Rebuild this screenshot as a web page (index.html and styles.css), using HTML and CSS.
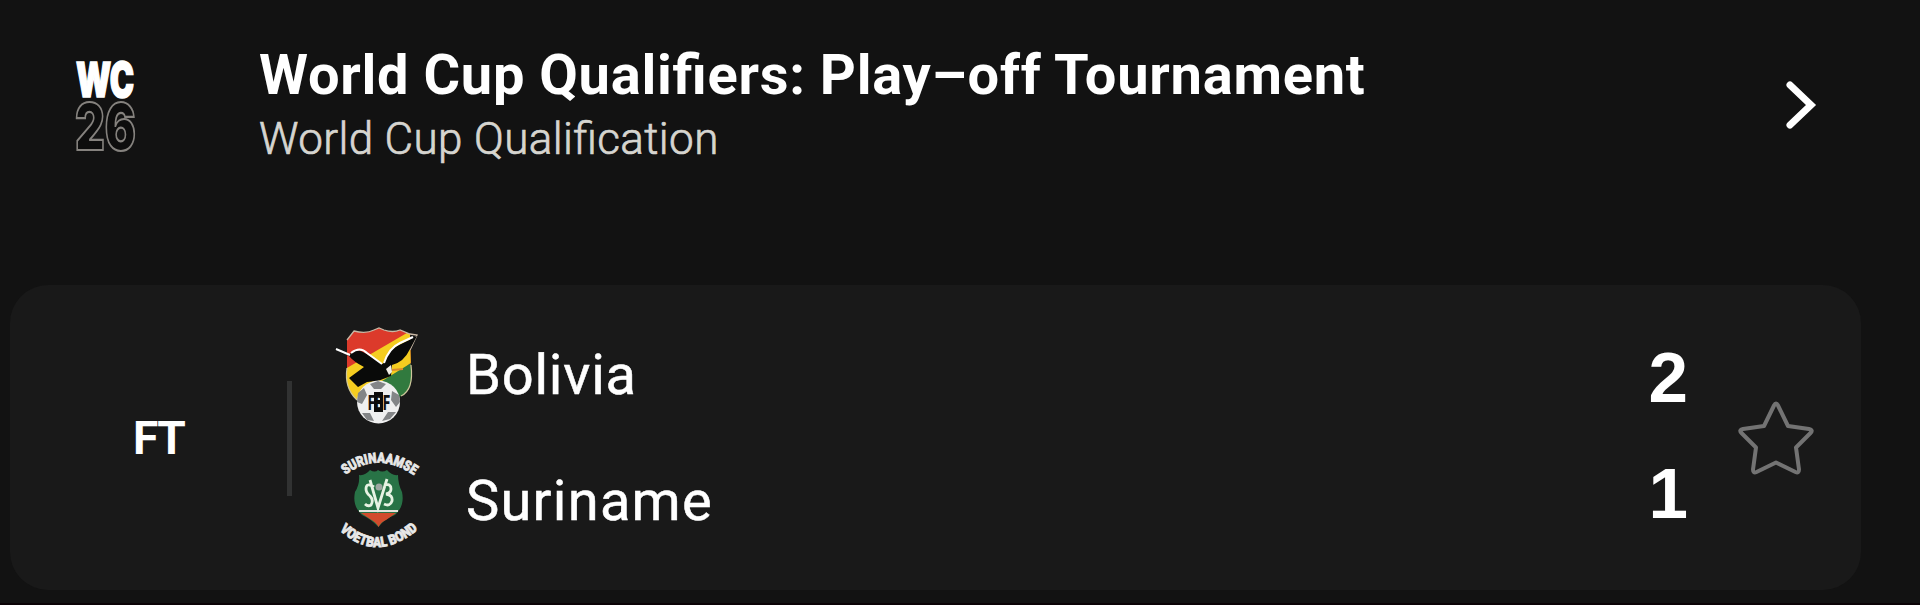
FILE: index.html
```html
<!DOCTYPE html>
<html lang="en">
<head>
<meta charset="utf-8">
<title>World Cup Qualifiers</title>
<link rel="stylesheet" href="styles.css">
</head>
<body>
<main class="page">
  <header class="league">
    <svg class="league-logo" viewBox="0 0 64 94" role="img">
      <text class="logo-wc" x="1" y="37.500" textLength="58" lengthAdjust="spacingAndGlyphs">WC</text>
      <text class="logo-26" x="0" y="90.500" textLength="61" lengthAdjust="spacingAndGlyphs">26</text>
    </svg>
    <div class="league-text">
      <h1 class="league-title">World Cup Qualifiers: Play–off Tournament</h1>
      <p class="league-sub">World Cup Qualification</p>
    </div>
    <svg class="chevron" viewBox="0 0 32 50"><path d="M5 5L26 25L5 45"/></svg>
  </header>
  <section class="match">
    <div class="status">FT</div>
    <div class="divider"></div>
    <div class="teams">
      <div class="team">
        <svg class="crest" viewBox="0 0 120 130">
          <defs><clipPath id="shield"><path d="M27 30L34 21Q46 24 54 20L59 18L64 20Q73 23 80 20L90 24L91 60Q94 80 81 86L58 98L37 90Q24 78 27 60Z"/></clipPath></defs>
          <g clip-path="url(#shield)">
            <rect x="20" y="15" width="80" height="50" fill="#dc3a2b"/>
            <path d="M20 62L92 20L100 45L40 95L20 90Z" fill="#f5cd20"/>
            <path d="M62 71L96 50V95H50Z" fill="#317a3e"/>
          </g>
          <path d="M27 30L34 21Q46 24 54 20L59 18L64 20Q73 23 80 20L90 24L97 25L90 40" fill="none" stroke="#c9b8a5" stroke-width="1.3"/>
          <path d="M91 55Q94 80 81 86M27 58Q24 78 37 90" fill="none" stroke="#cfc79c" stroke-width="1.2"/>
          <path d="M16 40L29 45Q36 37 45 43L63 54Q67 42 77 36L97 26L90 39Q84 52 72 55L71 66L58 71L47 72L38 77L29 68L44 57Q34 52 29 46Z" fill="#090a09"/>
          <path d="M16 39L30 45M31 43Q40 36 47 43L62 54M64 53Q69 38 80 33L93 27" fill="none" stroke="#fff" stroke-width="2"/>
          <path d="M66 59l5-4 1 7-3 3z" fill="#f4f0e8"/><path d="M72 60L83 59" stroke="#dc8b2d" stroke-width="2"/>
          <circle cx="58.500" cy="92" r="21.500" fill="#efefef"/>
          <path d="M50 74l8-3 8 3-5 5h-7zM38 83l6-5 3 7-5 9-5-2zM79 85l-7-4-1 9 5 7 4-5zM42 103l8 0 4 8-7-1zM76 102l-8 0-6 9 8-2z" fill="#838587"/>
          <text class="ball-text" x="48" y="100" textLength="22" lengthAdjust="spacingAndGlyphs">FBF</text>
          <path d="M54 82h9v20h-9zM57 86h3v4h-3zM57 94h3v4h-3z" fill="#0b0b0b" fill-rule="evenodd"/>
        </svg>
        <span class="team-name bolivia">Bolivia</span>
        <span class="score score-home">2</span>
      </div>
      <div class="team">
        <svg class="crest crest-away" viewBox="0 0 120 125">
          <defs>
            <path id="arcTop" d="M25.500 35Q58.500 9 98 38"/>
            <path id="arcBottom" d="M19.500 90Q58 126 102 86"/>
          </defs>
          <text class="crest-text"><textPath href="#arcTop" textLength="74" lengthAdjust="spacingAndGlyphs">SURINAAMSE</textPath></text>
          <text class="crest-text"><textPath href="#arcBottom" textLength="88" lengthAdjust="spacingAndGlyphs">VOETBAL BOND</textPath></text>
          <path d="M39 35Q45 36 50 30Q55 33 58 30Q62 33 67 30Q72 36 78 35Q78 44 82 52Q85 66 75 75Q64 79 58.500 87Q51 79 42 75Q32 66 35 52Q40 44 39 35Z" fill="#287346"/>
          <path d="M41 73H76L66 80Q61 82 58.500 87Q56 82 50 79Z" fill="#d24b2c"/>
          <path d="M39 71H78" stroke="#e5e5dd" stroke-width="2"/>
          <circle cx="59" cy="47" r="3.500" fill="#9da7a1"/>
          <path d="M54 47Q46 42 46 49Q46 53 50 56Q54 60 51 65Q48 67 45 64M50 40L58 68L67 39M64 45Q71 43 71 49Q71 53 66 54Q73 55 72 61Q70 67 64 64" fill="none" stroke="#e7f3e3" stroke-width="2.800"/>
        </svg>
        <span class="team-name suriname">Suriname</span>
        <span class="score score-away">1</span>
      </div>
    </div>
    <svg class="star" viewBox="0 0 80 76"><path d="M38 5.500Q40 1.500 42 5.500L52 26L73 29Q77.500 30 74.500 33L60 47.500L63 69.500Q63 73.500 59.500 72L40 62.500L20.500 72Q17 73.500 17 69.500L20 47.500L5.500 33Q2.500 30 7 29L28 26Z"/></svg>
  </section>
</main>
</body>
</html>
```
FILE: styles.css
```css
* { box-sizing: border-box; }
body { margin: 0; background: #121212; color: #fff; font-family: Roboto, "Noto Sans", sans-serif; }
.page { height: 605px; overflow: hidden; padding: 0 59px 0 10px; display: flex; flex-direction: column; border-bottom: 2px solid #0b0306; }
.league { height: 285px; flex: none; display: flex; align-items: flex-start; padding: 42px 42px 0 65px; }
.league-logo { width: 64px; height: 94px; margin-top: 17px; overflow: visible; }
.logo-wc { font: 900 48px Inter, sans-serif; fill: #fff; stroke: #fff; stroke-width: 1.6px; }
.logo-26 { font: 900 65px Inter, sans-serif; fill: #0d0d0d; stroke: #85827e; stroke-width: 2.2px; }
.league-text { margin-left: 120px; flex: 1; white-space: nowrap; font-feature-settings: "liga" 1; }
.league-title { margin: 0; font-size: 56px; line-height: 66px; font-weight: 700; letter-spacing: .75px; word-spacing: -.6px; }
.league-sub { margin: 0; padding-top: 1px; font-size: 44px; line-height: 60px; font-weight: 300; letter-spacing: .38px; color: #d6d5d0; -webkit-text-stroke: .7px #d6d5d0; }
.chevron { width: 32px; height: 50px; margin: 38px 2px 0 0; fill: none; stroke: #fff; stroke-width: 7px; stroke-linecap: round; stroke-linejoin: miter; }
.match { height: 305px; flex: none; border-radius: 38px; background: #191919; display: flex; align-items: center; }
.status { width: 277px; padding-left: 123px; font-size: 46px; font-weight: 700; line-height: 60px; letter-spacing: -1.5px; }
.divider { width: 5px; height: 115px; margin-top: 2px; background: #313232; }
.teams { flex: 1; display: flex; flex-direction: column; align-self: stretch; padding: 25px 48px 0 28px; }
.team { display: flex; height: 127px; align-items: flex-start; }
.crest { width: 120px; flex: none; overflow: visible; }
.crest-away { margin-top: 3px; }
.team-name { flex: 1; padding-left: 26px; font-size: 56px; line-height: 66px; margin-top: 32px; -webkit-text-stroke: .5px #fff; }
.bolivia { letter-spacing: .8px; }
.suriname { letter-spacing: 1.25px; margin-top: 31px; }
.score { font: 700 71px/80px "Liberation Sans", Arial, sans-serif; }
.score-home { margin-top: 28px; }
.score-away { margin-top: 17px; }
.star { width: 80px; height: 76px; margin-right: 45px; fill: none; stroke: #737373; stroke-width: 4px; stroke-linejoin: round; }
.crest-text { font: 900 14px Roboto, sans-serif; fill: #e8e8e8; stroke: #e8e8e8; stroke-width: .8px; }
.ball-text { font: 900 20px Roboto, sans-serif; fill: #111; }
```
